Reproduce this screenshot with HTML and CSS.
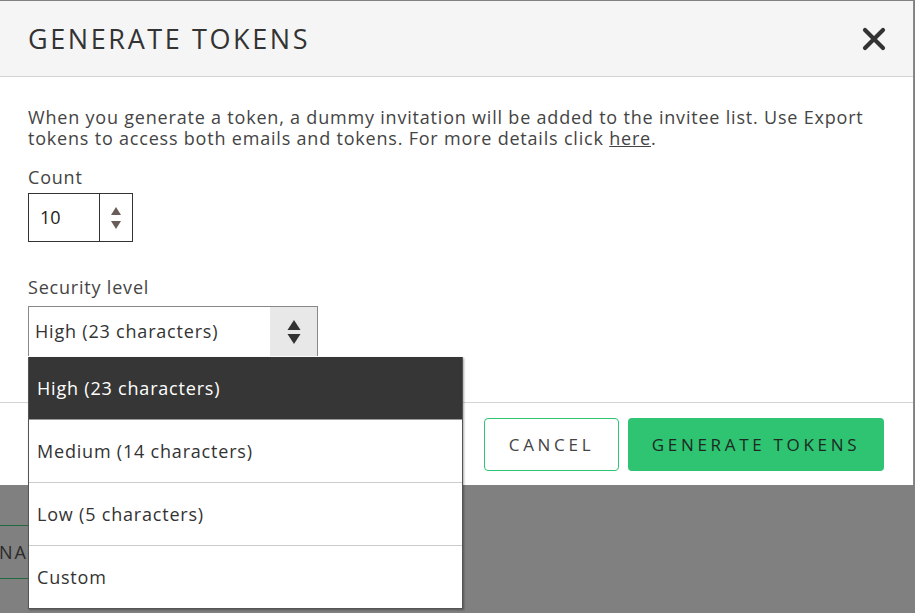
FILE: index.html
```html
<!DOCTYPE html>
<html>
<head>
<meta charset="utf-8">
<link rel="stylesheet" href="styles.css">
</head>
<body>
<div class="page">
  <div class="behind">NA</div>
  <div class="modal">
    <div class="modal-header">
      <h1 class="title">GENERATE TOKENS</h1>
      <svg class="close" width="24" height="24" viewBox="0 0 24 24"><path d="M3 3 L21 21 M21 3 L3 21" stroke="#333" stroke-width="4.2" stroke-linecap="round" fill="none"/></svg>
    </div>
    <div class="modal-body">
      <p class="intro">When you generate a token, a dummy invitation will be added to the invitee list. Use Export tokens to access both emails and tokens. For more details click <a href="#">here</a>.</p>
      <label class="label">Count</label>
      <div class="number">
        <span class="number-value">10</span>
        <span class="number-spin">
          <svg width="12" height="26" viewBox="0 0 12 26"><path d="M6 2 L11 10 L1 10 Z" fill="#6a5c58"/><path d="M1 16 L11 16 L6 24 Z" fill="#6a5c58"/></svg>
        </span>
      </div>
      <label class="label label-sec">Security level</label>
      <div class="select">
        <span class="select-value">High (23 characters)</span>
        <span class="select-arrow">
          <svg width="14" height="26" viewBox="0 0 14 26"><path d="M7 1 L13.5 11 L0.5 11 Z" fill="#333"/><path d="M0.5 15 L13.5 15 L7 25 Z" fill="#333"/></svg>
        </span>
      </div>
    </div>
    <div class="modal-footer">
      <button class="btn btn-cancel">CANCEL</button>
      <button class="btn btn-primary">GENERATE TOKENS</button>
    </div>
    <ul class="dropdown">
      <li class="opt opt-active">High (23 characters)</li>
      <li class="opt">Medium (14 characters)</li>
      <li class="opt">Low (5 characters)</li>
      <li class="opt">Custom</li>
    </ul>
  </div>
</div>
</body>
</html>
```
FILE: styles.css
```css
html, body {
  margin: 0;
  padding: 0;
}
body {
  background: #808080;
  font-family: "Open Sans", "DejaVu Sans", sans-serif;
  color: #444;
  width: 915px;
  height: 613px;
  overflow: hidden;
}
.page {
  position: relative;
  width: 915px;
  height: 613px;
  padding-top: 1px;
  box-sizing: border-box;
}
.behind {
  position: absolute;
  left: -20px;
  top: 525px;
  width: 48px;
  height: 54px;
  border-top: 1px solid #1f6a40;
  border-bottom: 1px solid #1f6a40;
  box-sizing: border-box;
  font-size: 18px;
  letter-spacing: 2px;
  color: #2a2a2a;
  line-height: 52px;
  text-align: right;
}
.modal {
  position: relative;
  width: 913px;
  background: #fff;
  border-right: 1px solid #8a8a8a;
}
.modal-header {
  height: 75px;
  background: #f5f5f5;
  border-bottom: 1px solid #d4d4d4;
  display: flex;
  align-items: center;
  justify-content: space-between;
  padding: 0 27px 0 28px;
}
.title {
  margin: 0;
  font-weight: 400;
  font-size: 27px;
  letter-spacing: 2.6px;
  color: #333;
}
.close {
  display: block;
}
.modal-body {
  padding: 30px 28px 0 28px;
  height: 326px;
  border-bottom: 1px solid #d4d4d4;
  box-sizing: border-box;
}
.intro {
  margin: 0;
  font-size: 18px;
  line-height: 21px;
  letter-spacing: 0.8px;
  color: #444;
}
.intro a {
  color: #444;
  text-decoration: underline;
}
.label {
  display: block;
  font-size: 18px;
  line-height: 21px;
  letter-spacing: 0.8px;
  margin-top: 18px;
  color: #444;
}
.label-sec {
  margin-top: 35px;
}
.number {
  margin-top: 5px;
  width: 105px;
  height: 49px;
  border: 1px solid #333;
  box-sizing: border-box;
  display: flex;
}
.number-value {
  width: 71px;
  border-right: 1px solid #333;
  font-size: 18px;
  line-height: 47px;
  padding-left: 11px;
  box-sizing: border-box;
  color: #222;
}
.number-spin {
  flex: 1;
  display: flex;
  align-items: center;
  justify-content: center;
}
.select {
  margin-top: 8px;
  width: 290px;
  height: 50px;
  border: 1px solid #888;
  border-bottom: none;
  box-sizing: border-box;
  display: flex;
}
.select-value {
  flex: 1;
  font-size: 18px;
  letter-spacing: 0.8px;
  line-height: 48px;
  padding-left: 6px;
  color: #333;
}
.select-arrow {
  width: 47px;
  background: #e8e8e8;
  display: flex;
  align-items: center;
  justify-content: center;
}
.modal-footer {
  height: 82px;
  display: flex;
  justify-content: flex-end;
  align-items: flex-start;
  gap: 9px;
  padding: 15px 29px 0 0;
  box-sizing: border-box;
}
.btn {
  height: 53px;
  border-radius: 4px;
  font-family: "Open Sans", "DejaVu Sans", sans-serif;
  font-size: 17px;
  letter-spacing: 3.7px;
  color: #333;
  cursor: pointer;
  padding: 0;
}
.btn-cancel {
  width: 135px;
  background: #fff;
  border: 1px solid #2ec472;
  color: #444;
}
.btn-primary {
  width: 256px;
  background: #2ec472;
  border: none;
  color: #1d2a22;
}
.dropdown {
  position: absolute;
  top: 356px;
  left: 28px;
  width: 435px;
  margin: 0;
  padding: 0;
  list-style: none;
  background: #fff;
  border: 1px solid #555;
  border-top: none;
  box-sizing: border-box;
  box-shadow: 1px 1px 2px rgba(0,0,0,0.35);
}
.opt {
  height: 62px;
  line-height: 62px;
  padding-left: 8px;
  font-size: 18px;
  letter-spacing: 0.8px;
  color: #333;
  border-bottom: 1px solid #ccc;
}
.opt:last-child {
  border-bottom: none;
}
.opt-active {
  background: #363636;
  color: #fff;
  border-bottom-color: #999;
}
```
